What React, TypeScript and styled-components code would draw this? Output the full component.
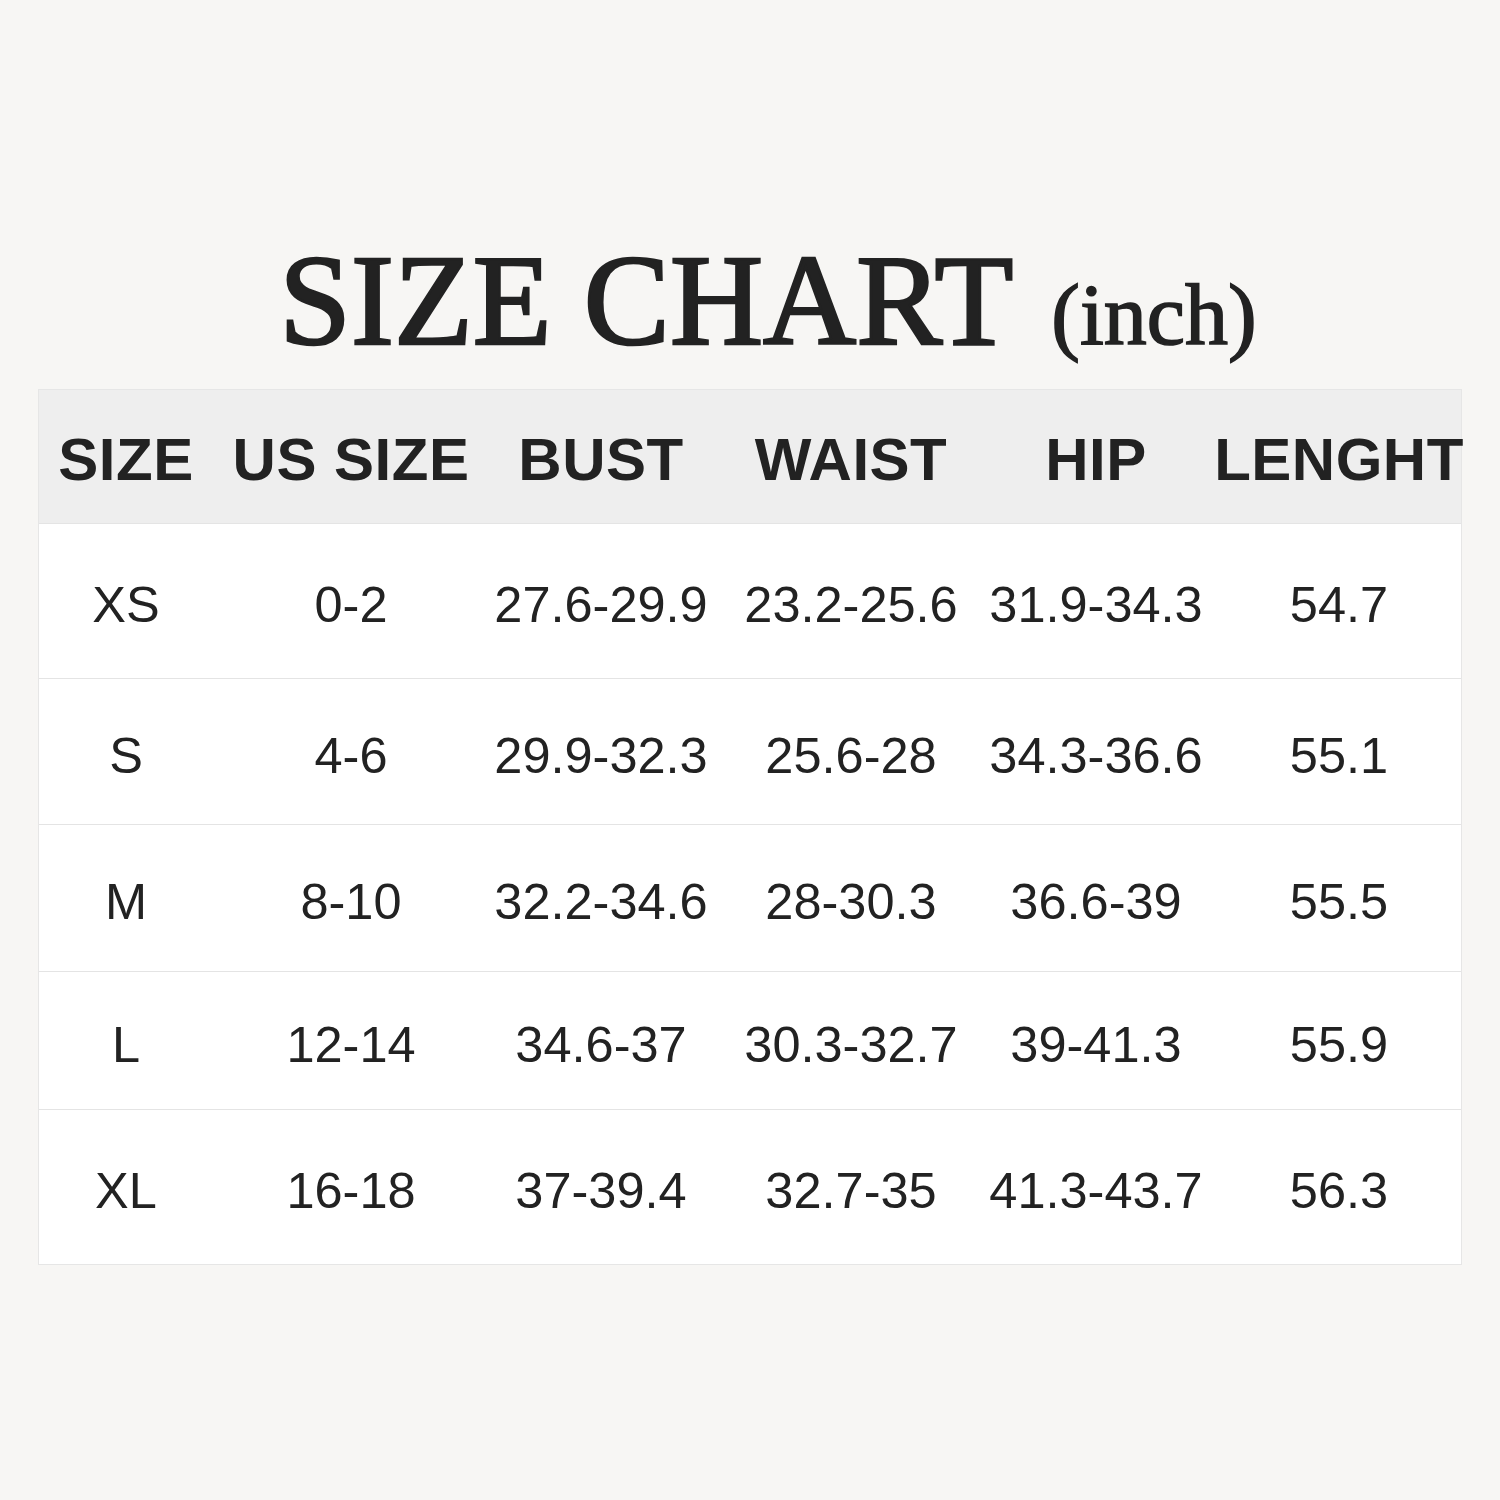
import styled, { createGlobalStyle } from 'styled-components'

const GlobalStyle = createGlobalStyle`
  body {
    margin: 0;
    background-color: #f7f6f4;
    color: #222222;
  }
`

const Page = styled.main`
  width: 1500px;
  height: 1500px;
  display: flex;
  flex-direction: column;
  align-items: center;
  padding-top: 236px;
  box-sizing: border-box;
`

const Title = styled.h1`
  margin: 0 0 24px 36px;
  font-family: 'Liberation Serif', 'Times New Roman', serif;
  font-size: 129px;
  font-weight: normal;
  line-height: 1;
  -webkit-text-stroke: 2.6px #222222;
  color: #222222;
  white-space: nowrap;
`

const Unit = styled.span`
  font-size: 86px;
  line-height: 1;
  -webkit-text-stroke: 1.6px #222222;
  margin-left: 38px;
`

const Table = styled.section`
  width: 1424px;
  border: 1px solid #e6e6e6;
  box-sizing: border-box;
  background-color: #ffffff;
`

const columns = '174px 276px 224px 276px 214px 260px'

const HeaderRow = styled.div`
  display: grid;
  grid-template-columns: ${columns};
  height: 133px;
  background-color: #eeeeee;
  align-items: center;
`

const Row = styled.div<{ $height: number }>`
  display: grid;
  grid-template-columns: ${columns};
  height: ${p => p.$height}px;
  align-items: center;
  border-top: 1px solid #e4e4e4;
  box-sizing: border-box;
`

const HeadCell = styled.div<{ $shift?: number }>`
  display: flex;
  justify-content: center;
  padding-left: ${p => p.$shift || 0}px;
  padding-top: 5px;
  font-family: 'Liberation Sans', Arial, sans-serif;
  font-size: 60px;
  font-weight: bold;
  letter-spacing: 0.5px;
  white-space: nowrap;
`

const Cell = styled.div<{ $shift?: number }>`
  display: flex;
  justify-content: center;
  padding-left: ${p => p.$shift || 0}px;
  padding-top: 7px;
  font-family: 'Liberation Sans', Arial, sans-serif;
  font-size: 50.5px;
  white-space: nowrap;
`

const headers = ['SIZE', 'US SIZE', 'BUST', 'WAIST', 'HIP', 'LENGHT']

const rows = [
  { h: 155, cells: ['XS', '0-2', '27.6-29.9', '23.2-25.6', '31.9-34.3', '54.7'] },
  { h: 146, cells: ['S', '4-6', '29.9-32.3', '25.6-28', '34.3-36.6', '55.1'] },
  { h: 147, cells: ['M', '8-10', '32.2-34.6', '28-30.3', '36.6-39', '55.5'] },
  { h: 138, cells: ['L', '12-14', '34.6-37', '30.3-32.7', '39-41.3', '55.9'] },
  { h: 155, cells: ['XL', '16-18', '37-39.4', '32.7-35', '41.3-43.7', '56.3'] },
]

export default function App() {
  return (
    <>
      <GlobalStyle />
      <Page>
        <Title>
          SIZE CHART<Unit>(inch)</Unit>
        </Title>
        <Table>
          <HeaderRow>
            {headers.map((h, i) => (
              <HeadCell key={h} $shift={i === 5 ? 12 : 0}>{h}</HeadCell>
            ))}
          </HeaderRow>
          {rows.map((r, index) => (
            <Row key={index} $height={r.h}>
              {r.cells.map((c, i) => (
                <Cell key={i} $shift={i === 5 ? 12 : 0}>{c}</Cell>
              ))}
            </Row>
          ))}
        </Table>
      </Page>
    </>
  )
}
